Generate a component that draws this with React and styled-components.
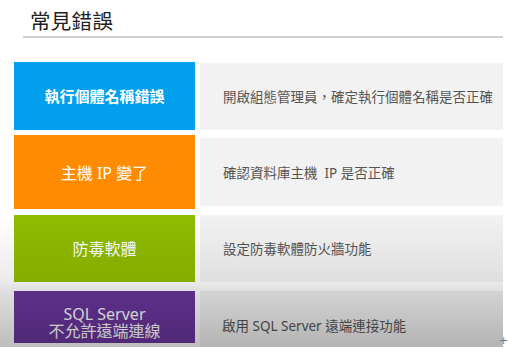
import React from "react";
import styled, { createGlobalStyle } from "styled-components";

const Global = createGlobalStyle`
  html, body { margin: 0; padding: 0; background: #ffffff; }
  body { font-family: "Noto Sans", "Noto Sans CJK TC", sans-serif; }
`;

const Frame = styled.div`
  position: relative;
  width: 503px;
  height: 347px;
  overflow: hidden;
  background: #ffffff;
`;

const Title = styled.div`
  margin: 10px 0 0 30px;
  font-size: 20.5px;
  line-height: 22px;
  color: #222222;
  letter-spacing: 0.3px;
`;

const Rule = styled.div`
  margin: 4px 0 0 23px;
  width: 480px;
  height: 1.5px;
  background: #cfcfcf;
`;

const List = styled.div`
  display: flex;
  flex-direction: column;
  padding: 24px 0 0 14px;
`;

const Row = styled.div`
  display: flex;
  align-items: flex-start;
  gap: 5px;
  height: ${(p) => p.$h}px;
  margin-top: ${(p) => p.$mt}px;
`;

const Label = styled.div`
  width: 181px;
  height: ${(p) => p.$lh}px;
  flex: none;
  background: ${(p) => p.$bg};
  color: #ffffff;
  display: flex;
  flex-direction: column;
  align-items: center;
  justify-content: center;
  box-sizing: border-box;
  font-size: ${(p) => p.$fs}px;
  font-weight: ${(p) => (p.$bold ? 700 : 400)};
  text-align: center;
  white-space: nowrap;
`;

const StackLabel = styled.div`
  width: 181px;
  height: ${(p) => p.$lh}px;
  flex: none;
  background: ${(p) => p.$bg};
  color: #ffffff;
  box-sizing: border-box;
  padding-top: 15px;
  font-size: 16px;
  line-height: 17px;
  text-align: center;
  white-space: nowrap;
`;

const Line = styled.div`
  display: block;
  height: 17px;
`;

const Desc = styled.div`
  width: 303px;
  height: ${(p) => p.$dh}px;
  flex: none;
  background: #f2f2f2;
  margin-top: ${(p) => p.$inset || 0}px;
  display: flex;
  align-items: center;
  padding-left: ${(p) => p.$pl || 23}px;
  padding-top: ${(p) => p.$pt || 0}px;
  box-sizing: border-box;
  font-size: 13.5px;
  color: #555555;
  white-space: nowrap;
`;

const Shade = styled.div`
  position: absolute;
  left: 0;
  top: 0;
  width: 100%;
  height: 100%;
  pointer-events: none;
  background: linear-gradient(
    to bottom,
    rgba(0, 0, 0, 0) 0px,
    rgba(0, 0, 0, 0) 215px,
    rgba(0, 0, 0, 0.08) 281px,
    rgba(0, 0, 0, 0.13) 292px,
    rgba(0, 0, 0, 0.26) 347px
  );
`;

const Cursor = styled.div`
  position: absolute;
  left: 499px;
  top: 335px;
  font-size: 11px;
  line-height: 12px;
  color: #777;
  font-family: "DejaVu Sans", sans-serif;
`;

export default function App() {
  return (
    <>
      <Global />
      <Frame>
        <Title>常見錯誤</Title>
        <Rule />
        <List>
          <Row $h={68} $mt={0}>
            <Label $bg="#019fee" $fs={15} $bold $lh={68}>執行個體名稱錯誤</Label>
            <Desc $inset={1} $dh={67}>開啟組態管理員，確定執行個體名稱是否正確</Desc>
          </Row>
          <Row $h={74} $mt={5}>
            <Label $bg="#ff8c00" $fs={16} $lh={74}>主機 IP 變了</Label>
            <Desc $inset={3} $dh={68}>確認資料庫主機&nbsp;&nbsp;IP 是否正確</Desc>
          </Row>
          <Row $h={67} $mt={6}>
            <Label $bg="#8fbb00" $fs={16} $lh={67}>防毒軟體</Label>
            <Desc $dh={67}>設定防毒軟體防火牆功能</Desc>
          </Row>
          <Row $h={57} $mt={9}>
            <StackLabel $bg="#6b369e" $lh={52}>
              <Line>SQL Server</Line>
              <Line>不允許遠端連線</Line>
            </StackLabel>
            <Desc $pl={22} $pt={12} $dh={57}>啟用 SQL Server 遠端連接功能</Desc>
          </Row>
        </List>
        <Shade />
      </Frame>
      <Cursor>+</Cursor>
    </>
  );
}
